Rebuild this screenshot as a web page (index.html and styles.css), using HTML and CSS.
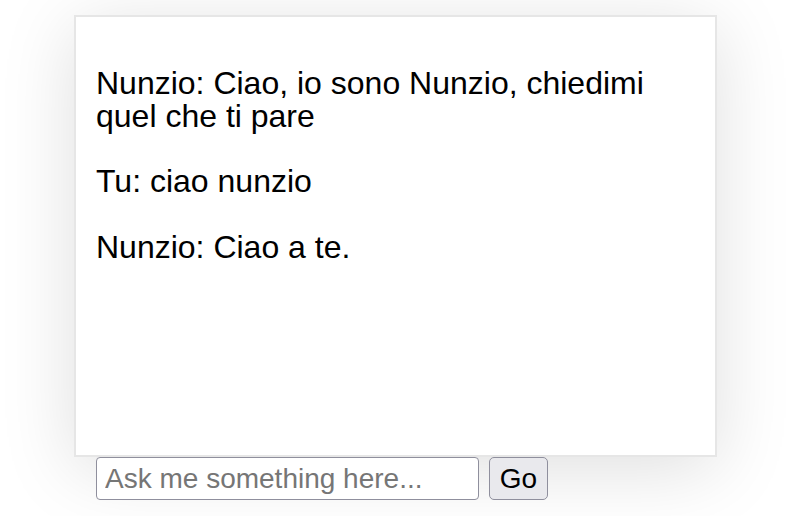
FILE: index.html
```html
<!DOCTYPE html>
<html lang="it">
<head>
<meta charset="utf-8">
<title>Nunzio</title>
<link rel="stylesheet" href="styles.css">
</head>
<body>
<div class="page">
  <div class="chat">
    <p class="msg">Nunzio: Ciao, io sono Nunzio, chiedimi quel che ti pare</p>
    <p class="msg">Tu: ciao nunzio</p>
    <p class="msg">Nunzio: Ciao a te.</p>
  </div>
  <form class="ask">
    <input class="ask-input" type="text" placeholder="Ask me something here...">
    <button class="ask-btn" type="button">Go</button>
  </form>
</div>
</body>
</html>
```

FILE: styles.css
```css
html, body {
  margin: 0;
  background: #fff;
}
body {
  font-family: "Liberation Sans", Arial, Helvetica, sans-serif;
  color: #000;
  min-height: 100vh;
}
.page {
  box-sizing: border-box;
  min-height: 100vh;
  padding: 15px 0 0 74px;
}
.chat {
  box-sizing: border-box;
  width: 643px;
  height: 442px;
  border: 2px solid #e6e6e6;
  background: #fff;
  padding: 17px 20px 0 20px;
  font-size: 32px;
  line-height: 32.5px;
  box-shadow: 0 12px 70px rgba(0, 0, 0, 0.13);
}
.msg {
  margin: 33px 0 0 0;
}
.ask {
  display: flex;
  gap: 10px;
  margin: 0;
  padding-left: 22px;
}
.ask-input {
  box-sizing: border-box;
  width: 383px;
  height: 43px;
  border: 1px solid #8f8f9d;
  border-radius: 4px;
  padding: 0 8px;
  font-family: "Liberation Sans", Arial, sans-serif;
  font-size: 28px;
  background: #fff;
  color: #000;
}
.ask-input::placeholder {
  color: #767676;
}
.ask-btn {
  box-sizing: border-box;
  width: 59px;
  height: 43px;
  border: 1px solid #8f8f9d;
  border-radius: 5px;
  background: #e9e9ed;
  font-family: "Liberation Sans", Arial, sans-serif;
  font-size: 28px;
  color: #000;
  padding: 0;
}
```
